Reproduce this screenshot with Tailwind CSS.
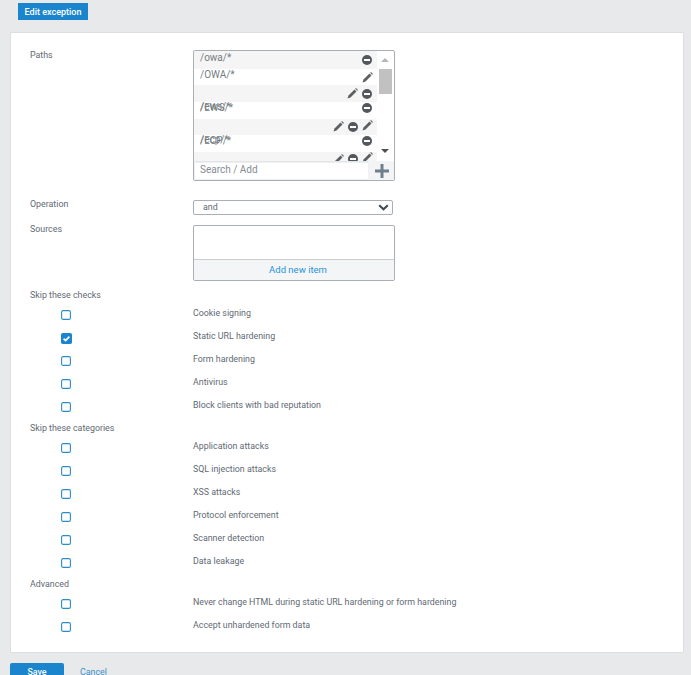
<!doctype html>
<html><head><meta charset="utf-8"><script src="https://cdn.jsdelivr.net/npm/@tailwindcss/browser@4"></script></head>
<body class="h-[675px] overflow-hidden bg-[#e8e9eb] font-['Roboto',sans-serif] text-[8.85px] leading-[12px] text-[#5f6a74]">
<svg class="hidden"><defs>
<symbol id="minus" viewBox="0 0 10 10"><circle cx="5" cy="5" r="5" fill="#54585c"/><rect x="2" y="4" width="6" height="2" fill="#fff"/></symbol>
<symbol id="pen" viewBox="0 0 11 11"><path d="M0.5 10.5 L1.5 7.5 L7.5 1.5 L9.5 3.5 L3.5 9.5 Z" fill="#5c6063"/><path d="M8.2 0.8 L9 0 L11 2 L10.2 2.8 Z" fill="#5c6063"/></symbol>
<symbol id="box" viewBox="0 0 10 10"><rect x="0.6" y="0.6" width="8.8" height="8.8" rx="1.5" fill="#fff" stroke="#2a8ccb" stroke-width="1.1"/></symbol>
<symbol id="checked" viewBox="0 0 11 11"><rect width="11" height="11" rx="1.8" fill="#1a85cd"/><path d="M2.6 5.6 L4.6 7.6 L8.4 3.6" fill="none" stroke="#fff" stroke-width="1.7"/></symbol>
</defs></svg>
<div class="pl-[18px] pt-[3px]"><div class="flex h-[17px] w-[70px] items-center justify-center bg-[#1a85cd] text-[9px] font-medium text-white">Edit exception</div></div>

<main class="ml-[10px] mt-[12px] h-[621px] w-[674px] border border-[#dcdee0] bg-white pl-[19px] pt-[17px]">
  <section class="flex h-[131px]">
    <div class="w-[163px] -translate-y-[1px]">Paths</div>
    <div class="flex h-[131px] w-[202px] flex-col overflow-hidden rounded-[2px] border border-[#a9afb5] bg-white">
      <div class="relative flex h-[110px] overflow-hidden">
        <div class="w-[183px] text-[10px] text-[#757c82]">
          <div class="relative h-[18px] bg-[#f5f5f5] pl-[6px] pt-[1px]">/owa/*<svg class="absolute right-[5px] top-[4px] h-[10px] w-[10px]"><use href="#minus"/></svg></div>
          <div class="relative h-[16px] pl-[6px] pt-0">/OWA/*<svg class="absolute right-[4px] top-[3px] h-[11px] w-[11px]"><use href="#pen"/></svg></div>
          <div class="relative h-[17px] bg-[#f5f5f5]"><svg class="absolute right-[19px] top-[3px] h-[11px] w-[11px]"><use href="#pen"/></svg><svg class="absolute right-[5px] top-[4px] h-[10px] w-[10px]"><use href="#minus"/></svg></div>
          <div class="relative h-[17px] pl-[6px]"><span class="absolute left-[6px] -top-[1px]">/ews/*</span><span class="absolute left-[6px] top-0">/EWS/*</span><svg class="absolute right-[5px] top-[1px] h-[10px] w-[10px]"><use href="#minus"/></svg></div>
          <div class="relative h-[16px] bg-[#f5f5f5]"><svg class="absolute right-[33px] top-[2px] h-[11px] w-[11px]"><use href="#pen"/></svg><svg class="absolute right-[19px] top-[3px] h-[10px] w-[10px]"><use href="#minus"/></svg><svg class="absolute right-[4px] top-[1px] h-[11px] w-[11px]"><use href="#pen"/></svg></div>
          <div class="relative h-[17px]"><span class="absolute left-[6px] -top-[1px]">/ecp/*</span><span class="absolute left-[6px] top-0">/ECP/*</span><svg class="absolute right-[5px] top-[1px] h-[10px] w-[10px]"><use href="#minus"/></svg></div>
          <div class="relative h-[9px] overflow-hidden bg-[#f5f5f5]"><svg class="absolute right-[33px] top-[2px] h-[11px] w-[11px]"><use href="#pen"/></svg><svg class="absolute right-[19px] top-[2px] h-[10px] w-[10px]"><use href="#minus"/></svg><svg class="absolute right-[4px] top-0 h-[11px] w-[11px]"><use href="#pen"/></svg></div>
        </div>
        <div class="relative w-[15px] bg-white">
          <div class="absolute left-[4px] top-[7px] h-0 w-0 border-x-[4px] border-b-[4px] border-x-transparent border-b-[#b5b8bb]"></div>
          <div class="absolute left-[2px] top-[18px] h-[25px] w-[13px] bg-[#c1c1c1]"></div>
          <div class="absolute bottom-[8px] left-[4px] h-0 w-0 border-x-[4px] border-t-[4px] border-x-transparent border-t-[#505050]"></div>
        </div>
      </div>
      <div class="flex h-[19px]">
        <div class="flex w-[175px] items-center rounded-[2px] border-t border-[#e2e4e6] pl-[6px] text-[10px] text-[#858c93] shadow-[inset_0_0_0_1px_#eef0f1]"><span class="-translate-y-[1px]">Search / Add</span></div>
        <div class="flex flex-1 items-center justify-center bg-[#f3f4f6]"><svg class="h-[14px] w-[14px]" viewBox="0 0 14 14"><path d="M5.5 0h3v5.5H14v3H8.5V14h-3V8.5H0v-3h5.5z" fill="#6e808a"/></svg></div>
      </div>
    </div>
  </section>

  <section class="mt-[19px] flex h-[15px] items-center">
    <div class="w-[163px] -translate-y-[4px]">Operation</div>
    <div class="flex h-[15px] w-[200px] items-center justify-between rounded-[2px] border border-[#a9afb5] pl-[9px] pr-[3px]"><span class="-translate-y-[1px]">and</span><svg class="h-[7px] w-[11px]" viewBox="0 0 11 7"><path d="M1.2 1.2 L5.5 5.2 L9.8 1.2" fill="none" stroke="#3d4a55" stroke-width="2.1"/></svg></div>
  </section>

  <section class="mt-[10px] flex">
    <div class="w-[163px] -translate-y-[2px]">Sources</div>
    <div class="flex h-[56px] w-[202px] flex-col overflow-hidden rounded-[2px] border border-[#a9afb5]">
      <div class="h-[34px] border-b border-[#c9cdd1]"></div>
      <div class="flex flex-1 items-center justify-center bg-[#f3f5f7] pl-[8px] pb-[1px] text-[9.5px] text-[#2a93d8]">Add new item</div>
    </div>
  </section>

  <div class="mt-[8px]">Skip these checks</div>
  <div class="mt-[2px] flex flex-col">
    <div class="flex h-[23px] items-center"><span class="flex w-[163px] pl-[31px]"><svg class="h-[10px] w-[10px]"><use href="#box"/></svg></span><span class="pb-[4px]">Cookie signing</span></div>
    <div class="flex h-[23px] items-center"><span class="flex w-[163px] pl-[31px]"><svg class="h-[11px] w-[11px] translate-y-[1px]"><use href="#checked"/></svg></span><span class="pb-[4px]">Static URL hardening</span></div>
    <div class="flex h-[23px] items-center"><span class="flex w-[163px] pl-[31px]"><svg class="h-[10px] w-[10px]"><use href="#box"/></svg></span><span class="pb-[4px]">Form hardening</span></div>
    <div class="flex h-[23px] items-center"><span class="flex w-[163px] pl-[31px]"><svg class="h-[10px] w-[10px]"><use href="#box"/></svg></span><span class="pb-[4px]">Antivirus</span></div>
    <div class="flex h-[23px] items-center"><span class="flex w-[163px] pl-[31px]"><svg class="h-[10px] w-[10px]"><use href="#box"/></svg></span><span class="pb-[4px]">Block clients with bad reputation</span></div>
  </div>

  <div class="mt-[4px]">Skip these categories</div>
  <div class="mt-[2px] flex flex-col">
    <div class="flex h-[23px] items-center"><span class="flex w-[163px] pl-[31px]"><svg class="h-[10px] w-[10px]"><use href="#box"/></svg></span><span class="pb-[4px]">Application attacks</span></div>
    <div class="flex h-[23px] items-center"><span class="flex w-[163px] pl-[31px]"><svg class="h-[10px] w-[10px]"><use href="#box"/></svg></span><span class="pb-[4px]">SQL injection attacks</span></div>
    <div class="flex h-[23px] items-center"><span class="flex w-[163px] pl-[31px]"><svg class="h-[10px] w-[10px]"><use href="#box"/></svg></span><span class="pb-[4px]">XSS attacks</span></div>
    <div class="flex h-[23px] items-center"><span class="flex w-[163px] pl-[31px]"><svg class="h-[10px] w-[10px]"><use href="#box"/></svg></span><span class="pb-[4px]">Protocol enforcement</span></div>
    <div class="flex h-[23px] items-center"><span class="flex w-[163px] pl-[31px]"><svg class="h-[10px] w-[10px]"><use href="#box"/></svg></span><span class="pb-[4px]">Scanner detection</span></div>
    <div class="flex h-[23px] items-center"><span class="flex w-[163px] pl-[31px]"><svg class="h-[10px] w-[10px]"><use href="#box"/></svg></span><span class="pb-[4px]">Data leakage</span></div>
  </div>

  <div class="mt-[4px]">Advanced</div>
  <div class="mt-[2px] flex flex-col">
    <div class="flex h-[23px] items-center"><span class="flex w-[163px] pl-[31px]"><svg class="h-[10px] w-[10px]"><use href="#box"/></svg></span><span class="pb-[4px]">Never change HTML during static URL hardening or form hardening</span></div>
    <div class="flex h-[23px] items-center"><span class="flex w-[163px] pl-[31px]"><svg class="h-[10px] w-[10px]"><use href="#box"/></svg></span><span class="pb-[4px]">Accept unhardened form data</span></div>
  </div>
</main>

<div class="ml-[10px] mt-[10px] flex items-start">
  <div class="flex h-[20px] w-[54px] justify-center rounded-t-[2px] bg-[#1a85cd] pt-[3px] font-medium text-white">Save</div>
  <div class="ml-[16px] pt-[3px] text-[#3f92c9]">Cancel</div>
</div>
</body></html>
